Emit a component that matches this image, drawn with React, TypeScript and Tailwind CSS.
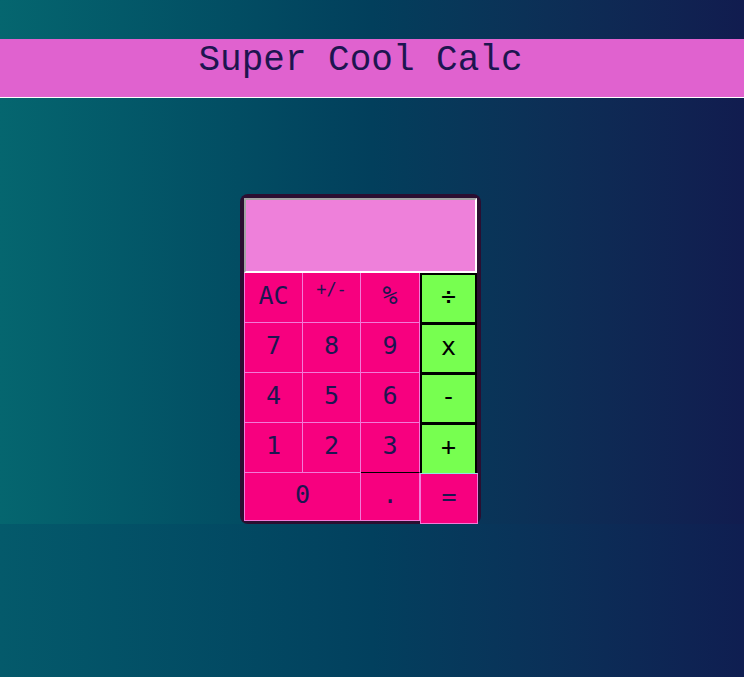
import React from 'react';

const mono = { fontFamily: '"Liberation Mono", "DejaVu Sans Mono", monospace' };
const keyFont = { fontFamily: '"DejaVu Sans Mono", "Liberation Mono", monospace' };

const pinkCell =
  'shrink-0 flex items-center justify-center bg-[#f7007f] text-[#1d1550] border-[#f27ad8] text-[25px] pb-[4px]';
const greenCell =
  'shrink-0 flex items-center justify-center bg-[#77ff50] text-black border-2 border-b border-black w-[57px] h-[50px] text-[25px] pb-[4px]';

const Pink: React.FC<{ label: string; className?: string }> = ({ label, className }) => (
  <div className={`${pinkCell} ${className ?? ''}`}>{label}</div>
);

export default function App() {
  const rows = [
    ['7', '8', '9', 'x'],
    ['4', '5', '6', '-'],
    ['1', '2', '3', '+'],
  ];

  return (
    <div className="min-h-screen bg-gradient-to-r from-[#045a6b] via-[#02405e] to-[#0f1e51]" style={mono}>
      <div className="bg-gradient-to-r from-[#05666f] via-[#023f5c] to-[#111c4f] pt-[39px]">
        <header className="h-[59px] bg-[#e062cf] border-b border-white">
          <h1 className="pr-[23px] pt-[2px] text-center text-[36px] leading-[40px] text-[#1d1550]">
            Super Cool Calc
          </h1>
        </header>

        <div className="flex justify-center pr-[23px] pt-[96px]">
          <div className="w-[241px] rounded-[8px] bg-[#2b0e31] pt-[4px] pl-[4px] pr-[4px]" style={keyFont}>
            <div className="w-[233px] h-[75px] bg-[#ee80da] border-2 border-t-[#a3a3a3] border-l-[#a3a3a3] border-r-white border-b-white" />

            <div className="flex h-[50px]">
              <Pink label="AC" className="w-[59px] h-[50px] border-l border-r border-b" />
              <div className="shrink-0 flex items-start justify-center w-[58px] h-[50px] bg-[#f7007f] text-[#1d1550] border-r border-b border-[#f27ad8] pt-[6px] text-[17px] leading-[20px]">
                +/-
              </div>
              <Pink label="%" className="w-[59px] h-[50px] border-r border-b" />
              <div className={`${greenCell} border-t-2`}>÷</div>
            </div>

            {rows.map((row, i) => (
              <div key={i} className="flex h-[50px]">
                <Pink label={row[0]} className="w-[59px] h-[50px] border-l border-r border-b" />
                <Pink label={row[1]} className="w-[58px] h-[50px] border-r border-b" />
                <Pink
                  label={row[2]}
                  className={`w-[59px] h-[50px] border-r ${i === 2 ? 'border-b border-b-black' : 'border-b'}`}
                />
                <div className={`${greenCell} ${i === 2 ? 'border-b-0' : ''}`}>{row[3]}</div>
              </div>
            ))}

            <div className="flex items-start h-[51px]">
              <Pink label="0" className="w-[117px] h-[48px] border-l border-r border-b" />
              <Pink label="." className="w-[59px] h-[48px] border-r border-b" />
              <Pink label="=" className="w-[58px] h-[51px] border border-t-[#8fe8e0]" />
            </div>
          </div>
        </div>
      </div>
    </div>
  );
}
